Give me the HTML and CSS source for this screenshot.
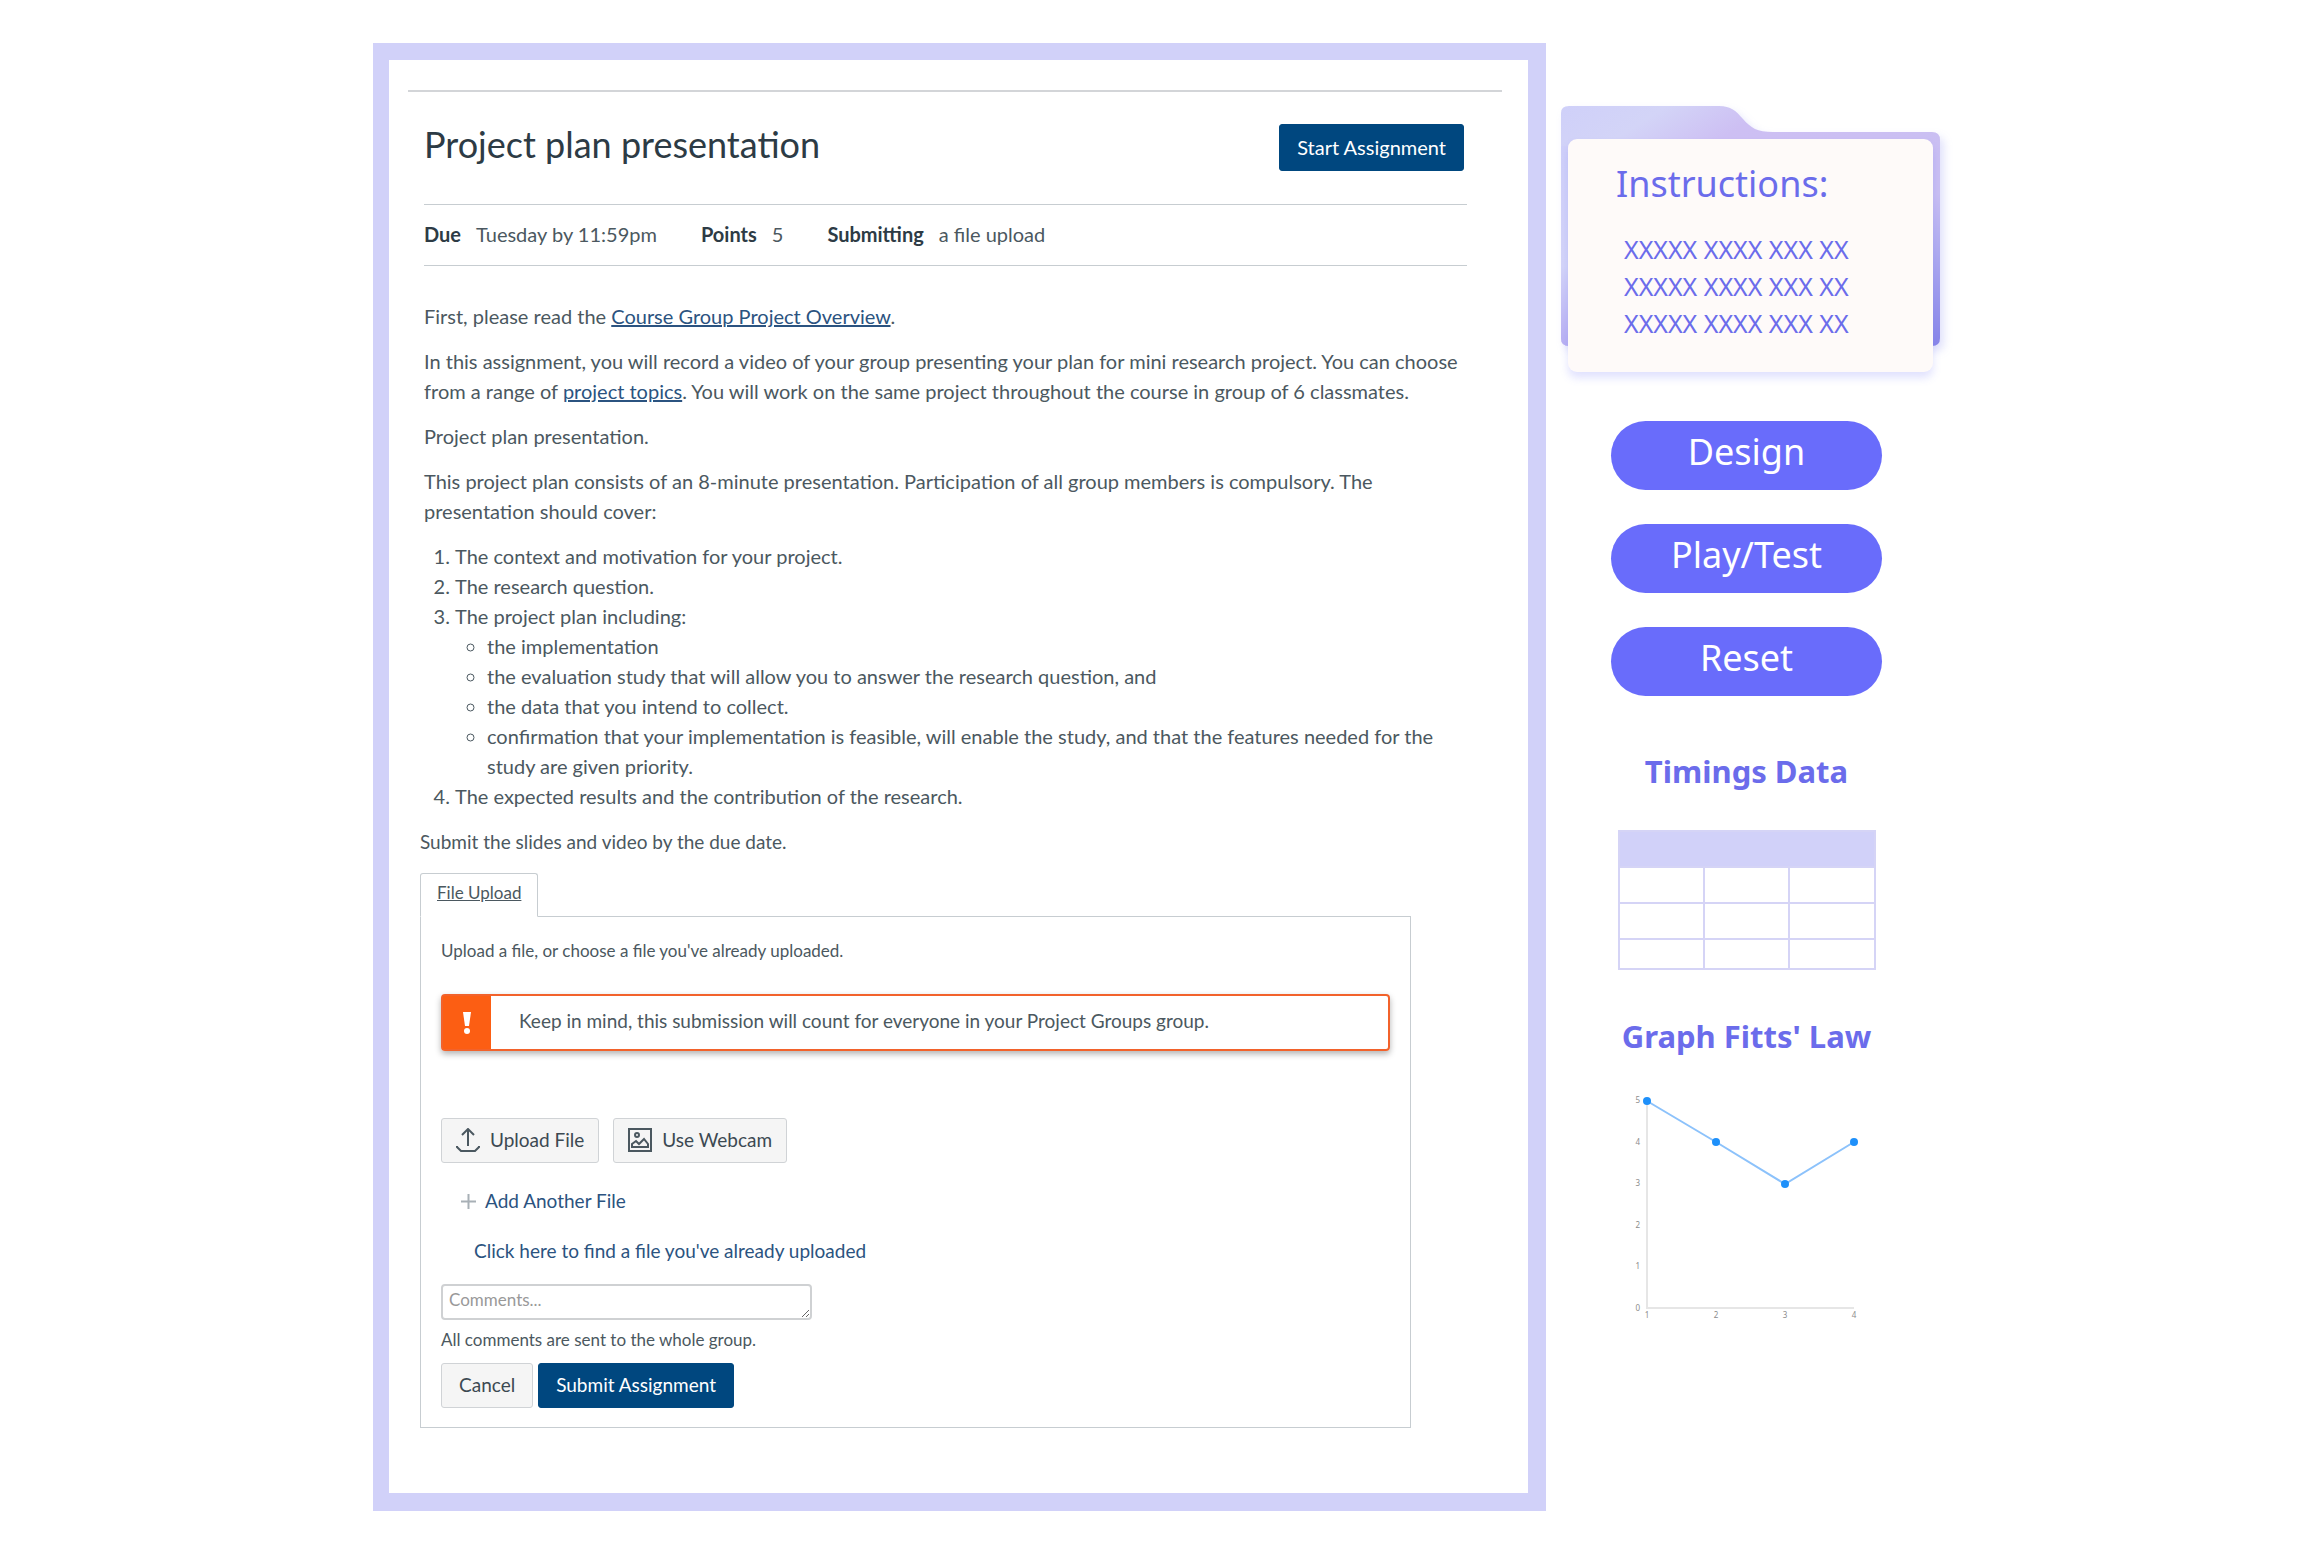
FILE: index.html
```html
<!DOCTYPE html>
<html lang="en">
<head>
  <meta charset="utf-8">
  <meta name="viewport" content="width=device-width, initial-scale=1">
  <title>Project plan presentation</title>
  <link rel="stylesheet" href="styles.css">
</head>
<body>
  <div class="page">
    <main class="sheet">
      <article class="assignment">
        <header class="assignment-header">
          <h1>Project plan presentation</h1>
          <button type="button" class="btn btn-primary btn-start">Start Assignment</button>
        </header>
        <dl class="meta">
          <div><dt>Due</dt><dd>Tuesday by 11:59pm</dd></div>
          <div><dt>Points</dt><dd>5</dd></div>
          <div><dt>Submitting</dt><dd>a file upload</dd></div>
        </dl>
        <div class="description">
          <p>First, please read the <a href="#overview">Course Group Project Overview</a>.</p>
          <p>In this assignment, you will record a video of your group presenting your plan for mini research project. You can choose from a range of <a href="#topics">project topics</a>. You will work on the same project throughout the course in group of 6 classmates.</p>
          <p>Project plan presentation.</p>
          <p>This project plan consists of an 8-minute presentation. Participation of all group members is compulsory. The presentation should cover:</p>
          <ol>
            <li>The context and motivation for your project.</li>
            <li>The research question.</li>
            <li>The project plan including:
              <ul>
                <li>the implementation</li>
                <li>the evaluation study that will allow you to answer the research question, and</li>
                <li>the data that you intend to collect.</li>
                <li>confirmation that your implementation is feasible, will enable the study, and that the features needed for the study are given priority.</li>
              </ul>
            </li>
            <li>The expected results and the contribution of the research.</li>
          </ol>
        </div>
      </article>

      <section class="submission">
        <p>Submit the slides and video by the due date.</p>
        <nav class="tabs"><a class="tab" href="#upload">File Upload</a></nav>
        <form class="upload" id="upload">
          <p class="small">Upload a file, or choose a file you've already uploaded.</p>
          <div class="alert" role="alert">
            <span class="alert-icon">
              <svg width="8" height="22" viewBox="0 0 8 22" aria-hidden="true"><path d="M0 0h8L6 14H2z"/><circle cx="4" cy="19" r="3"/></svg>
            </span>
            <span class="alert-text">Keep in mind, this submission will count for everyone in your Project Groups group.</span>
          </div>
          <div class="sources">
            <button type="button" class="btn btn-icon">
              <svg width="24" height="24" viewBox="0 0 24 24" aria-hidden="true"><path d="M12 18V1M6 7l6-6 6 6M1 18v1l4 4h14l4-4v-1"/></svg>
              Upload File
            </button>
            <button type="button" class="btn btn-icon">
              <svg width="24" height="24" viewBox="0 0 24 24" aria-hidden="true"><path d="M1 1h22v22H1zM4 19v-3l4-3 3 3 5-5 4 5v3z"/><circle cx="9" cy="7" r="2"/></svg>
              Use Webcam
            </button>
          </div>
          <a class="add-file" href="#add">
            <svg width="15" height="15" viewBox="0 0 15 15" aria-hidden="true"><path d="M7.500 0v15M0 7.500h15"/></svg>
            Add Another File
          </a>
          <a class="find-file" href="#files">Click here to find a file you've already uploaded</a>
          <textarea class="comments" aria-label="Comments" placeholder="Comments..." rows="1"></textarea>
          <p class="small">All comments are sent to the whole group.</p>
          <div class="actions">
            <button type="button" class="btn">Cancel</button>
            <button type="submit" class="btn btn-primary">Submit Assignment</button>
          </div>
        </form>
      </section>
    </main>

    <aside class="side">
      <section class="folder">
        <svg class="folder-back" viewBox="0 0 380 242" preserveAspectRatio="none" aria-hidden="true">
          <defs>
            <linearGradient id="body" x1="0" y1="0" x2="1" y2="1">
              <stop offset="0" stop-color="#cfd0f9"/>
              <stop offset=".14" stop-color="#d3d4f7"/>
              <stop offset=".28" stop-color="#cdbff3"/>
              <stop offset=".68" stop-color="#c9bff2"/>
              <stop offset=".8" stop-color="#b0acef"/>
              <stop offset="1" stop-color="#8784e8"/>
            </linearGradient>
            <linearGradient id="edge" x1="0" y1="0" x2="0" y2="1">
              <stop offset="0" stop-color="#d0d0f9"/>
              <stop offset=".6" stop-color="#d4d5f8"/>
              <stop offset="1" stop-color="#b8aff2"/>
            </linearGradient>
          </defs>
          <path fill="url(#body)" d="M0 7Q0 0 8 0H158C170 0 175 5 182 13C190 22 196 26 212 26H371Q379 26 379 34V232Q379 240 371 240H8Q0 240 0 232Z"/>
          <path fill="url(#edge)" d="M0 40H12V240H8Q0 240 0 232Z"/>
        </svg>
        <div class="folder-front">
          <h2>Instructions:</h2>
          <p>XXXXX XXXX XXX XX<br>XXXXX XXXX XXX XX<br>XXXXX XXXX XXX XX</p>
        </div>
      </section>

      <div class="tools">
        <div class="modes">
          <button type="button" class="pill">Design</button>
          <button type="button" class="pill">Play/Test</button>
          <button type="button" class="pill">Reset</button>
        </div>
        <h2 class="heading" id="timings">Timings Data</h2>
        <table class="timings" aria-labelledby="timings">
          <thead><tr><th colspan="3"></th></tr></thead>
          <tbody>
            <tr><td></td><td></td><td></td></tr>
            <tr><td></td><td></td><td></td></tr>
            <tr><td></td><td></td><td></td></tr>
          </tbody>
        </table>
        <h2 class="heading heading-graph">Graph Fitts' Law</h2>
        <svg class="chart" width="236" height="230" viewBox="-6 0 236 230" role="img" aria-label="Line chart of Fitts' Law timings">
          <path class="axis" d="M12 11V218H219"/>
          <path class="series" d="M12 11L81 52L150 94L219 52"/>
          <g class="dots"><circle cx="12" cy="11" r="4"/><circle cx="81" cy="52" r="4"/><circle cx="150" cy="94" r="4"/><circle cx="219" cy="52" r="4"/></g>
          <g class="ticks-y">
            <text x="5" y="13">5</text><text x="5" y="55">4</text><text x="5" y="96">3</text><text x="5" y="138">2</text><text x="5" y="179">1</text><text x="5" y="221">0</text>
          </g>
          <g class="ticks-x">
            <text x="12" y="228">1</text><text x="81" y="228">2</text><text x="150" y="228">3</text><text x="219" y="228">4</text>
          </g>
        </svg>
      </div>
    </aside>
  </div>
</body>
</html>
```
FILE: styles.css
```css
* { box-sizing: border-box; }

body {
  margin: 0;
  background: #fff;
  color: #4b5860;
  font: 20px/30px Lato, "Liberation Sans", sans-serif;
}

h1, h2, p, dl, dd, ol, ul { margin: 0; }

.page {
  display: grid;
  grid-template-columns: minmax(0, 1fr) 380px;
  align-items: start;
  gap: 15px;
  padding: 43px 359px 40px 373px;
}

.sheet {
  padding: 30px 26px 65px 19px;
  border: solid #d1d1f9;
  border-width: 17px 18px 18px 16px;
}

/* Assignment */
.assignment {
  padding: 32px 35px 0 16px;
  border-top: 2px solid #d3d5d8;
}

.assignment-header {
  display: flex;
  justify-content: space-between;
  align-items: flex-start;
  padding: 0 3px 33px 0;
}

h1 {
  color: #2d3b45;
  font-size: 36px;
  font-weight: 400;
  line-height: 40px;
}

.meta {
  display: flex;
  gap: 44px;
  padding: 14px 0 16px;
  border: solid #c7cdd1;
  border-width: 1px 0;
}

.meta div { display: flex; gap: 15px; }
.meta dt { color: #2d3b45; font-weight: 700; }

.description { margin-top: 35px; }
.description p { margin-bottom: 15px; }
.description ol { padding-left: 31px; }
.description ul { padding-left: 32px; list-style: circle; }

a { color: #2b5380; }

/* Submission */
.submission { padding: 16px 91px 0 12px; font-size: 19px; }

.tabs { display: flex; margin-top: 16px; }

.tab {
  position: relative;
  margin-bottom: -1px;
  padding: 4px 16px 8px;
  border: 1px solid #c7cdd1;
  border-bottom-color: #fff;
  border-radius: 3px 3px 0 0;
  background: #fff;
  color: #4b5860;
  font-size: 17px;
}

.upload {
  display: flex;
  flex-direction: column;
  align-items: flex-start;
  padding: 19px 20px;
  border: 1px solid #c7cdd1;
}

.small { font-size: 17px; }

.alert {
  display: flex;
  align-self: stretch;
  margin: 28px 0 67px;
  border: 2px solid #f2622b;
  border-radius: 4px;
  box-shadow: 0 3px 6px rgba(0, 0, 0, .3);
}

.alert-icon {
  display: grid;
  place-items: center;
  width: 48px;
  background: #fc5e13;
}

.alert-icon svg { fill: #fff; }
.alert-text { padding: 10px 28px 13px; }

.btn {
  height: 45px;
  padding: 0 17px 2px;
  border: 1px solid #d0d3d6;
  border-radius: 3px;
  background: #f5f5f5;
  color: #3c4952;
  font: inherit;
}

.btn-primary {
  border-color: #00477f;
  background: #00477f;
  color: #fff;
}

.btn-start { height: 47px; }

.btn-icon {
  display: flex;
  align-items: center;
  gap: 10px;
  padding: 0 14px 2px;
}

.btn-icon svg { fill: none; stroke: #4b5860; stroke-width: 2; }

.sources { display: flex; gap: 14px; }

.add-file {
  display: flex;
  align-items: center;
  gap: 9px;
  margin: 23px 0 20px 20px;
  text-decoration: none;
}

.add-file svg { fill: none; stroke: #a8b0b6; stroke-width: 2; }
.find-file { margin: 0 0 18px 33px; text-decoration: none; }

.comments {
  width: 371px;
  max-width: 100%;
  height: 36px;
  margin-bottom: 5px;
  padding: 1px 6px;
  border: 2px solid #cfd1d3;
  border-radius: 4px;
  color: #4b5860;
  font: inherit;
  font-size: 17px;
  line-height: 26px;
  overflow: hidden;
  resize: both;
}

.comments::placeholder { color: #999; opacity: 1; }

.actions { display: flex; gap: 5px; margin-top: 8px; }

/* Side column */
.side {
  padding-top: 63px;
  color: #6b6ceb;
  font-family: "Noto Sans", sans-serif;
}

.folder { position: relative; padding: 33px 8px 0 7px; }

.folder-back {
  position: absolute;
  top: 0;
  left: 0;
  width: 100%;
  height: 242px;
  filter: drop-shadow(4px 5px 4px rgba(107, 108, 235, .2));
}

.folder-front {
  position: relative;
  padding: 21px 48px 30px;
  border-radius: 9px;
  background: #fefaf9;
  box-shadow: 0 6px 9px rgba(107, 108, 251, .2);
}

.folder-front h2 { font-size: 36px; font-weight: 400; line-height: 48px; }
.folder-front p { padding: 23px 0 0 8px; font-size: 25px; line-height: 37px; }

.tools {
  display: flex;
  flex-direction: column;
  align-items: center;
  padding: 49px 9px 0 0;
}

.modes { display: grid; gap: 34px; width: 271px; }

.pill {
  height: 69px;
  padding: 0 0 8px;
  border: 0;
  border-radius: 35px;
  background: #696cfb;
  color: #fff;
  font: 36px/48px "Noto Sans", sans-serif;
}

.heading { margin-top: 53px; font-size: 31px; line-height: 44px; }
.heading-graph { margin-top: 44px; }

.timings {
  width: 258px;
  margin-top: 37px;
  border-collapse: collapse;
  table-layout: fixed;
}

.timings th, .timings td {
  height: 36px;
  padding: 0;
  border: 2px solid #d5d4f6;
}

.timings th { background: #d1d1f9; }
.timings tr:last-child td { height: 30px; }

.chart { margin-top: 32px; font-size: 8px; }
.axis { fill: none; stroke: #e6e6e6; stroke-width: 2; }
.series { fill: none; stroke: #8cc2fb; stroke-width: 2; }
.dots { fill: #1e90fa; }
.ticks-y, .ticks-x { fill: #8c8c8c; }
.ticks-y { text-anchor: end; }
.ticks-x { text-anchor: middle; }

@media (max-width: 1900px) {
  .page { padding-right: 32px; padding-left: 32px; }
}

@media (max-width: 1100px) {
  .page { grid-template-columns: minmax(0, 1fr); justify-items: center; }
  .submission { padding-right: 12px; }
}
```
